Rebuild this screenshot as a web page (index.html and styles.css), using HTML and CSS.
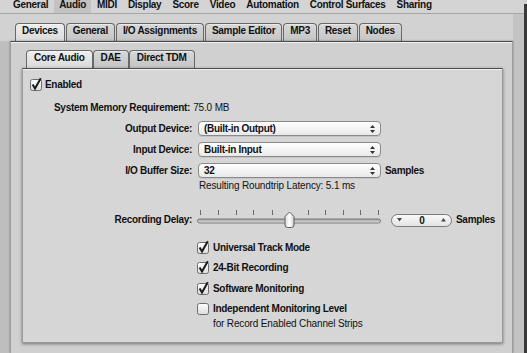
FILE: index.html
```html
<!DOCTYPE html>
<html>
<head>
<meta charset="utf-8">
<title>Audio Preferences</title>
<link rel="stylesheet" href="styles.css">
</head>
<body>
<div class="window">
  <nav class="menubar">
    <span class="menu-item">General</span>
    <span class="menu-item active">Audio</span>
    <span class="menu-item">MIDI</span>
    <span class="menu-item">Display</span>
    <span class="menu-item">Score</span>
    <span class="menu-item">Video</span>
    <span class="menu-item">Automation</span>
    <span class="menu-item">Control Surfaces</span>
    <span class="menu-item">Sharing</span>
  </nav>
  <div class="main">
    <div class="tabview outer">
      <div class="tabs outer-tabs">
        <span class="tab selected">Devices</span>
        <span class="tab">General</span>
        <span class="tab">I/O Assignments</span>
        <span class="tab">Sample Editor</span>
        <span class="tab">MP3</span>
        <span class="tab">Reset</span>
        <span class="tab">Nodes</span>
      </div>
      <div class="panel outer-panel">
        <div class="tabview inner">
          <div class="tabs inner-tabs">
            <span class="tab selected">Core Audio</span>
            <span class="tab">DAE</span>
            <span class="tab">Direct TDM</span>
          </div>
          <div class="panel inner-panel">
            <div class="enabled-row">
              <svg class="checkbox" width="12" height="12" viewBox="0 0 12 12"><defs><linearGradient id="cb" x1="0" y1="0" x2="0" y2="1"><stop offset="0" stop-color="#ffffff"/><stop offset="1" stop-color="#dcdcdc"/></linearGradient></defs><rect x="0.5" y="0.5" width="11" height="11" rx="2" fill="url(#cb)" stroke="#6c6c6c"/><path d="M2.6 5.6 L5 9.6 L10.8 -0.8" fill="none" stroke="#1c1c1c" stroke-width="2"/></svg>
              <span>Enabled</span>
            </div>
            <div class="memory-row">
              <span>System Memory Requirement:</span>
              <span class="regular value">75.0 MB</span>
            </div>
            <div class="form-row first">
              <span class="label">Output Device:</span>
              <div class="popup"><span>(Built-in Output)</span><svg class="arrows" width="5" height="10" viewBox="0 0 5 10"><path d="M0 4 L2.5 1 L5 4 Z M0 6 L2.5 9 L5 6 Z" fill="#333"/></svg></div>
            </div>
            <div class="form-row">
              <span class="label">Input Device:</span>
              <div class="popup"><span>Built-in Input</span><svg class="arrows" width="5" height="10" viewBox="0 0 5 10"><path d="M0 4 L2.5 1 L5 4 Z M0 6 L2.5 9 L5 6 Z" fill="#333"/></svg></div>
            </div>
            <div class="form-row">
              <span class="label">I/O Buffer Size:</span>
              <div class="popup"><span>32</span><svg class="arrows" width="5" height="10" viewBox="0 0 5 10"><path d="M0 4 L2.5 1 L5 4 Z M0 6 L2.5 9 L5 6 Z" fill="#333"/></svg></div>
              <span class="unit">Samples</span>
            </div>
            <div class="latency-row regular">Resulting Roundtrip Latency: 5.1 ms</div>
            <div class="delay-row">
              <span class="label">Recording Delay:</span>
              <svg class="slider" width="184" height="19" viewBox="0 0 184 19">
                <defs>
                  <linearGradient id="trk" x1="0" y1="0" x2="0" y2="1"><stop offset="0" stop-color="#9a9a9a"/><stop offset="1" stop-color="#e6e6e6"/></linearGradient>
                  <linearGradient id="thb" x1="0" y1="0" x2="1" y2="0"><stop offset="0" stop-color="#d8d8d8"/><stop offset="0.5" stop-color="#ffffff"/><stop offset="1" stop-color="#cfcfcf"/></linearGradient>
                </defs>
                <g stroke="#6a6a6a" stroke-width="1">
                  <path d="M3.5 0 V5 M21.5 0 V5 M39.5 0 V5 M56.5 0 V5 M75.5 0 V5 M111.5 0 V5 M128.5 0 V5 M146.5 0 V5 M163.5 0 V5 M181.5 0 V5"/>
                </g>
                <rect x="0.5" y="9" width="183" height="4" rx="2" fill="url(#trk)" stroke="#7a7a7a"/>
                <path d="M92.5 2 L97 6.5 L97 15 Q97 17.5 94.5 17.5 L90.5 17.5 Q88 17.5 88 15 L88 6.5 Z" fill="url(#thb)" stroke="#5e5e5e"/>
              </svg>
              <div class="stepper">
                <svg width="5" height="4" viewBox="0 0 5 4"><path d="M0 0 L5 0 L2.5 3.5 Z" fill="#4a4a4a"/></svg>
                <span>0</span>
                <svg width="5" height="4" viewBox="0 0 5 4"><path d="M0 3.5 L5 3.5 L2.5 0 Z" fill="#4a4a4a"/></svg>
              </div>
              <span class="unit">Samples</span>
            </div>
            <div class="check-row universal">
              <svg class="checkbox" width="12" height="12" viewBox="0 0 12 12"><rect x="0.5" y="0.5" width="11" height="11" rx="2" fill="url(#cb)" stroke="#6c6c6c"/><path d="M2.6 5.6 L5 9.6 L10.8 -0.8" fill="none" stroke="#1c1c1c" stroke-width="2"/></svg>
              <span>Universal Track Mode</span>
            </div>
            <div class="check-row bit24">
              <svg class="checkbox" width="12" height="12" viewBox="0 0 12 12"><rect x="0.5" y="0.5" width="11" height="11" rx="2" fill="url(#cb)" stroke="#6c6c6c"/><path d="M2.6 5.6 L5 9.6 L10.8 -0.8" fill="none" stroke="#1c1c1c" stroke-width="2"/></svg>
              <span>24-Bit Recording</span>
            </div>
            <div class="check-row software">
              <svg class="checkbox" width="12" height="12" viewBox="0 0 12 12"><rect x="0.5" y="0.5" width="11" height="11" rx="2" fill="url(#cb)" stroke="#6c6c6c"/><path d="M2.6 5.6 L5 9.6 L10.8 -0.8" fill="none" stroke="#1c1c1c" stroke-width="2"/></svg>
              <span>Software Monitoring</span>
            </div>
            <div class="check-row independent">
              <svg class="checkbox" width="12" height="12" viewBox="0 0 12 12"><rect x="0.5" y="0.5" width="11" height="11" rx="2" fill="url(#cb)" stroke="#6c6c6c"/></svg>
              <div class="check-text">
                <span>Independent Monitoring Level</span>
                <span class="regular sub">for Record Enabled Channel Strips</span>
              </div>
            </div>
          </div>
        </div>
      </div>
    </div>
  </div>
</div>
<div class="edge"></div>
</body>
</html>
```
FILE: styles.css
```css
* { box-sizing: border-box; }
html, body { margin: 0; padding: 0; }
body {
  width: 527px;
  height: 353px;
  overflow: hidden;
  display: flex;
  font-family: "Liberation Sans", Arial, sans-serif;
  font-size: 10px;
  font-weight: bold;
  letter-spacing: -0.3px;
  color: #111;
  background: #d2d2d2;
}
.regular { font-weight: normal; letter-spacing: -0.15px; }

.window { width: 524px; height: 353px; display: flex; flex-direction: column; }
.edge { width: 3px; height: 353px; background: linear-gradient(#cfcfcf 0 4px, #3a3a3a 4px); }

/* top preference bar */
.menubar {
  display: flex;
  height: 14px;
  padding-left: 8px;
  background: #d4d4d4;
  border-bottom: 1px solid #a6a6a6;
}
.menu-item { padding: 0 5px; height: 13px; line-height: 9px; margin-right: 1px; }
.menu-item.active { background: #c2c2c2; }

.main {
  flex: 1;
  display: flex;
  padding: 0 11px 0 10px;
  overflow: hidden;
  background:
    linear-gradient(to right, transparent 513px, #c3c3c3 513px),
    linear-gradient(#d2d2d2 27px, #bebebe 27px);
}

/* tab views */
.tabview { display: flex; flex-direction: column; }
.tabview.outer { width: 503px; }
.tabs { display: flex; height: 18px; }
.outer-tabs { margin-top: 9px; padding-left: 5px; gap: 1px; }
.inner-tabs { padding-left: 4px; }
.tab {
  height: 18px;
  padding: 1px 6px 0;
  line-height: 12px;
  border: 1px solid #686868;
  border-bottom: none;
  border-radius: 4px 4px 0 0;
  background: linear-gradient(#d8d8d8, #c4c4c4);
  box-shadow: inset 0 1px 0 rgba(255,255,255,0.45);
  white-space: nowrap;
}
.inner-tabs .tab { padding: 1px 7px 0; }
.tab.selected { background: linear-gradient(#eeeeee, #dadada); }

.outer-panel {
  flex: 1;
  background: #d0d0d0;
  border-top: 1px solid #4c4c4c;
  border-left: 1px solid #9c9c9c;
  border-right: 1px solid #9c9c9c;
  box-shadow: inset 0 1px 0 #efefef, 0 0 2px rgba(0,0,0,0.35);
  padding: 8px 9px 0 11px;
}
.inner-panel {
  height: 275px;
  background: #d6d6d6;
  border: 1px solid #9a9a9a;
  border-top-color: #4c4c4c;
  box-shadow: inset 0 1px 0 #f0f0f0, 0 1px 3px rgba(0,0,0,0.45);
  padding-top: 10px;
}

/* rows */
.enabled-row { display: flex; align-items: center; height: 12px; padding-left: 7px; gap: 3px; line-height: 12px; }
.checkbox { flex: none; overflow: visible; }
.memory-row { margin-top: 11px; height: 12px; line-height: 12px; padding-left: 31px; display: flex; }
.memory-row .value { margin-left: 3px; }

.form-row { display: flex; align-items: center; height: 15px; margin-top: 6px; line-height: 12px; }
.form-row.first { margin-top: 7px; }
.label { width: 169px; text-align: right; flex: none; white-space: nowrap; }
.popup {
  margin-left: 6px;
  width: 183px;
  height: 15px;
  display: flex;
  align-items: center;
  padding-left: 5px;
  line-height: 13px;
  border: 1px solid #8a8a8a;
  border-radius: 4px;
  background: linear-gradient(#ffffff, #e9e9e9);
  box-shadow: 0 1px 0 rgba(0,0,0,0.08);
}
.popup .arrows { margin-left: auto; margin-right: 5px; }
.unit { margin-left: 4px; }

.latency-row { margin-top: 2px; height: 12px; line-height: 12px; padding-left: 176px; }

.delay-row { display: flex; align-items: center; height: 19px; margin-top: 18px; line-height: 12px; }
.delay-row .label { padding-top: 1px; }
.slider { margin-left: 5px; flex: none; }
.stepper {
  margin-left: 10px;
  width: 61px;
  height: 13px;
  margin-top: 1px;
  display: flex;
  align-items: center;
  justify-content: space-between;
  padding: 0 5px;
  border: 1px solid #7a7a7a;
  border-radius: 7px;
  background: linear-gradient(#f8f8f8, #e4e4e4);
  line-height: 11px;
}
.stepper span { padding-left: 1px; }
.delay-row .unit { padding-top: 1px; }

.check-row { display: flex; align-items: flex-start; padding-left: 174px; gap: 4px; line-height: 12px; }
.universal { margin-top: 13px; }
.bit24 { margin-top: 8px; }
.software { margin-top: 9px; }
.independent { margin-top: 8px; }
.check-text { display: flex; flex-direction: column; }
.check-text .sub { margin-top: 3px; }
```
